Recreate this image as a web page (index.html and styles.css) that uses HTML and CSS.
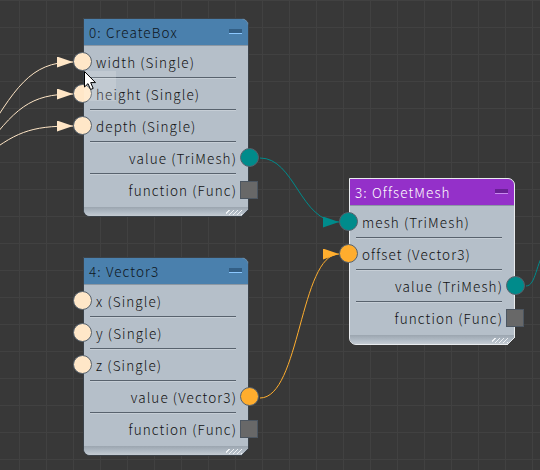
FILE: index.html
```html
<!DOCTYPE html>
<html>
<head>
<meta charset="utf-8">
<link rel="stylesheet" href="styles.css">
</head>
<body>
<div class="canvas">
  <svg class="edges" width="540" height="470" viewBox="0 0 540 470">
    <defs>
      <marker id="a-cream" markerUnits="userSpaceOnUse" markerWidth="17" markerHeight="12" refX="16" refY="5.5" orient="auto"><path d="M0,0 L16,5.5 L0,11 z" fill="#ffe6c6"/></marker>
      <marker id="a-teal" markerUnits="userSpaceOnUse" markerWidth="17" markerHeight="12" refX="16" refY="5.5" orient="auto"><path d="M0,0 L16,5.5 L0,11 z" fill="#008b8b"/></marker>
      <marker id="a-orange" markerUnits="userSpaceOnUse" markerWidth="17" markerHeight="12" refX="16" refY="5.5" orient="auto"><path d="M0,0 L16,5.5 L0,11 z" fill="#ffae2e"/></marker>
    </defs>
    <path d="M -20 145 C 15 88, 30 62, 73 62" stroke="#ffe6c6" fill="none" marker-end="url(#a-cream)"/>
    <path d="M -20 155 C 15 108, 30 94, 73 94" stroke="#ffe6c6" fill="none" marker-end="url(#a-cream)"/>
    <path d="M -20 160 C 15 132, 30 126, 73 126" stroke="#ffe6c6" fill="none" marker-end="url(#a-cream)"/>
    <path d="M 260 158 C 295 158, 300 222, 339 222" stroke="#008b8b" fill="none" marker-end="url(#a-teal)"/>
    <path d="M 260 398 C 300 398, 300 254, 339 254" stroke="#ffae2e" fill="none" marker-end="url(#a-orange)"/>
    <path d="M 526 286 C 536 286, 536 262, 546 250" stroke="#008b8b" fill="none"/>
  </svg>

  <div class="node node-create">
    <div class="header blue"><span class="title">0: CreateBox</span><span class="minimize"></span></div>
    <div class="row in"><span class="port cream"></span>width (Single)</div>
    <div class="row in"><span class="port cream"></span>height (Single)</div>
    <div class="row in"><span class="port cream"></span>depth (Single)</div>
    <div class="row out">value (TriMesh)<span class="port teal"></span></div>
    <div class="row out last">function (Func)<span class="sq"></span></div>
    <div class="footer"></div>
  </div>

  <div class="node node-vector">
    <div class="header blue"><span class="title">4: Vector3</span><span class="minimize"></span></div>
    <div class="row in"><span class="port cream"></span>x (Single)</div>
    <div class="row in"><span class="port cream"></span>y (Single)</div>
    <div class="row in"><span class="port cream"></span>z (Single)</div>
    <div class="row out">value (Vector3)<span class="port orange"></span></div>
    <div class="row out last">function (Func)<span class="sq"></span></div>
    <div class="footer"></div>
  </div>

  <div class="node node-offset selected">
    <div class="header purple"><span class="title">3: OffsetMesh</span><span class="minimize"></span></div>
    <div class="row in"><span class="port teal"></span>mesh (TriMesh)</div>
    <div class="row in"><span class="port orange"></span>offset (Vector3)</div>
    <div class="row out">value (TriMesh)<span class="port teal"></span></div>
    <div class="row out last">function (Func)<span class="sq"></span></div>
    <div class="footer"></div>
  </div>

  <div class="hover"></div>
  <svg class="cursor" width="14" height="21" viewBox="0 0 14 21"><path d="M0.5 0.5 L0.5 16 L4 12.6 L6.6 18.5 L9.2 17.4 L6.7 11.6 L11.5 11.6 Z" fill="#fff" stroke="#000" stroke-width="1" stroke-linejoin="miter"/></svg>
</div>
</body>
</html>
```

FILE: styles.css
```css
html, body {
  margin: 0;
  padding: 0;
  background: #383838;
}

.canvas {
  position: relative;
  width: 540px;
  height: 470px;
  overflow: hidden;
  background-color: #383838;
  background-image:
    linear-gradient(to right, #414141 1px, transparent 1px),
    linear-gradient(to bottom, #414141 1px, transparent 1px);
  background-size: 27px 27px;
  background-position: 19px 0px;
  font-family: "Noto Sans CJK JP", "Noto Sans", sans-serif;
  font-size: 13.5px;
  font-weight: 300;
  letter-spacing: 1.1px;
  color: #111;
}

.edges {
  position: absolute;
  left: 0;
  top: 0;
}

.node {
  position: absolute;
  width: 166px;
  box-sizing: border-box;
  border: 1px solid #3b4249;
  background: #b5bfc9;
  border-radius: 0 7px 0 7px;
  display: flex;
  flex-direction: column;
}

.node::after {
  content: "";
  position: absolute;
  right: -1px;
  bottom: -1px;
  width: 8px;
  height: 8px;
  background: linear-gradient(135deg, transparent calc(50% - 0.7px), #3b4249 calc(50% - 0.7px), #3b4249 calc(50% + 0.7px), #383838 calc(50% + 0.7px));
}

.node.selected {
  border-color: #e9ecef;
}
.node.selected::after {
  background: linear-gradient(135deg, transparent calc(50% - 0.7px), #e9ecef calc(50% - 0.7px), #e9ecef calc(50% + 0.7px), #383838 calc(50% + 0.7px));
}

.node-create { left: 83px; top: 18px; }
.node-vector { left: 83px; top: 257px; }
.node-offset { left: 349px; top: 178px; }

.header {
  height: 27px;
  display: flex;
  align-items: center;
  justify-content: space-between;
  padding: 0 5px 0 5px;
  border-top-right-radius: 6px;
  border-bottom: 1px solid #8c98a4;
  box-sizing: border-box;
}
.header.blue { background: #4a80ad; color: #0e1620; }
.header.purple { background: #9430c9; color: #ffffff; }

.title {
  line-height: 1;
  padding-top: 1px;
}

.minimize {
  width: 13px;
  height: 5px;
  box-sizing: border-box;
  margin-right: 1px;
  margin-bottom: 2px;
}
.blue .minimize {
  background: #335f85;
  border-bottom: 1px solid #8cc8ff;
}
.purple .minimize {
  background: #6a2096;
  border-bottom: 1px solid #c98af0;
}

.row {
  position: relative;
  height: 32px;
  display: flex;
  align-items: center;
  padding: 0 11px 0 12px;
  white-space: nowrap;
}
.row.out { justify-content: flex-end; }

.row::after {
  content: "";
  position: absolute;
  left: 6px;
  right: 12px;
  bottom: 0;
  height: 1px;
  background: #58626d;
  box-shadow: 0 1px 0 #c6ced6;
}
.row.last::after { display: none; }

.port {
  position: absolute;
  width: 19px;
  height: 19px;
  box-sizing: border-box;
  border-radius: 50%;
  border: 1.5px solid #56616c;
  top: 6px;
}
.row.in .port { left: -11px; }
.row.out .port { right: -11px; }

.port.cream { background: #ffe7c8; }
.port.teal { background: #008b8b; }
.port.orange { background: #ffad2e; }

.sq {
  position: absolute;
  right: -10px;
  top: 7px;
  width: 18px;
  height: 18px;
  box-sizing: border-box;
  background: #686868;
  border: 1.5px solid #4c5661;
}

.footer {
  height: 9px;
  margin-top: 1px;
  background: linear-gradient(to bottom, #9ba5af, #b2bcc6 60%, #c4cbd2);
  border-radius: 0 0 0 6px;
  position: relative;
}
.footer::before {
  content: "";
  position: absolute;
  right: 6px;
  bottom: 1px;
  width: 16px;
  height: 5px;
  background: repeating-linear-gradient(135deg, transparent 0 2px, #eef1f4 2px 3px);
}

.hover {
  position: absolute;
  left: 84px;
  top: 71px;
  width: 32px;
  height: 30px;
  background: rgba(255, 255, 255, 0.16);
}

.cursor {
  position: absolute;
  left: 84px;
  top: 71px;
}
```
